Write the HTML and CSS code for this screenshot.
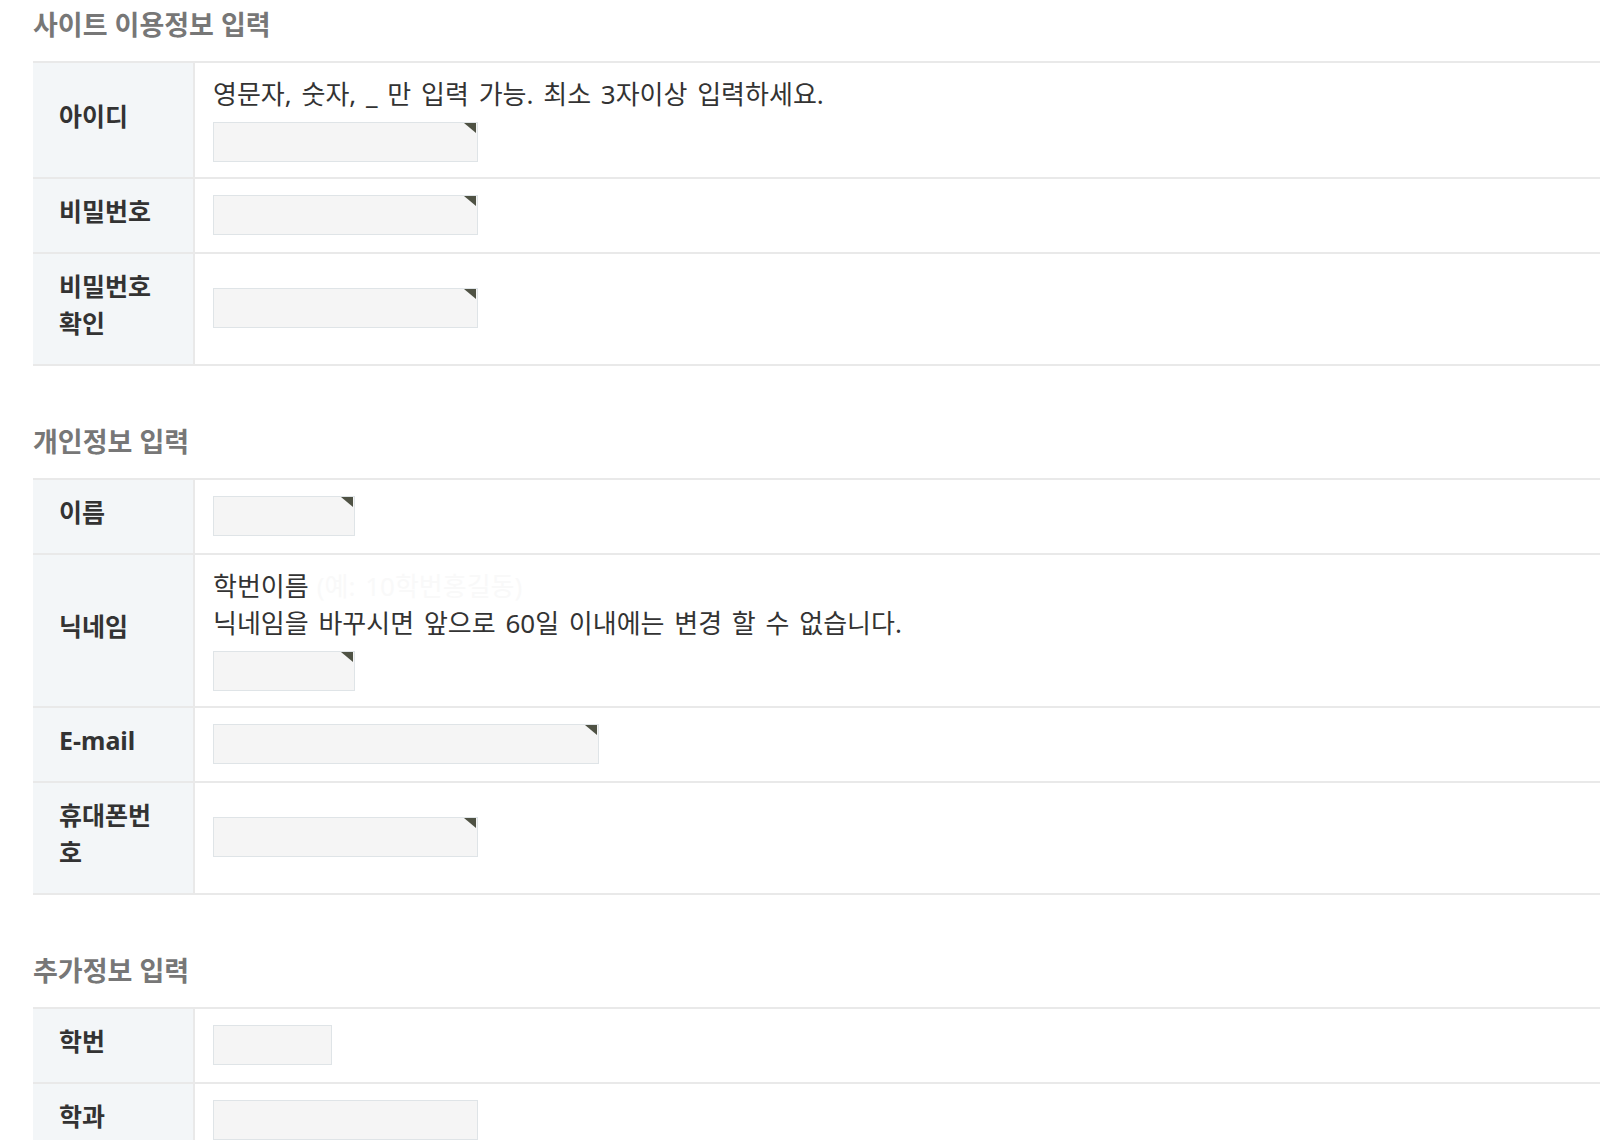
FILE: index.html
```html
<!DOCTYPE html>
<html lang="ko">

<head>
    <meta charset="utf-8">
    <meta name="viewport" content="width=device-width, initial-scale=1.0">
    <title>회원가입</title>
    <link rel="stylesheet" href="styles.css">
</head>

<body>
    <div class="wrap">
        <section class="form-section">
            <h2 class="section-title">사이트 이용정보 입력</h2>
            <table class="form-table">
                <tr>
                    <th>아이디</th>
                    <td>
                        <p class="help">영문자, 숫자, _ 만 입력 가능. 최소 3자이상 입력하세요.</p>
                        <span class="field req field-md"><input type="text" name="mb_id"></span>
                    </td>
                </tr>
                <tr>
                    <th>비밀번호</th>
                    <td><span class="field req field-md"><input type="password" name="mb_password"></span></td>
                </tr>
                <tr>
                    <th>비밀번호 확인</th>
                    <td><span class="field req field-md"><input type="password" name="mb_password_re"></span></td>
                </tr>
            </table>
        </section>

        <section class="form-section">
            <h2 class="section-title">개인정보 입력</h2>
            <table class="form-table">
                <tr>
                    <th>이름</th>
                    <td><span class="field req field-sm"><input type="text" name="mb_name"></span></td>
                </tr>
                <tr>
                    <th>닉네임</th>
                    <td>
                        <p class="help">학번이름<span class="ghost">(예: 10학번홍길동)</span></p>
                        <p class="help">닉네임을 바꾸시면 앞으로 60일 이내에는 변경 할 수 없습니다.</p>
                        <span class="field req field-sm"><input type="text" name="mb_nick"></span>
                    </td>
                </tr>
                <tr>
                    <th>E-mail</th>
                    <td><span class="field req field-lg"><input type="text" name="mb_email"></span></td>
                </tr>
                <tr>
                    <th>휴대폰번호</th>
                    <td><span class="field req field-md"><input type="text" name="mb_hp"></span></td>
                </tr>
            </table>
        </section>

        <section class="form-section">
            <h2 class="section-title">추가정보 입력</h2>
            <table class="form-table">
                <tr>
                    <th>학번</th>
                    <td><span class="field field-xs"><input type="text" name="mb_1"></span></td>
                </tr>
                <tr>
                    <th>학과</th>
                    <td><span class="field field-md"><input type="text" name="mb_2"></span></td>
                </tr>
            </table>
        </section>
    </div>
</body>

</html>
```

FILE: styles.css
```css
:root {
    --line: #e9e9e9;
    --label-bg: #f3f6f8;
    --input-bg: #f5f5f5;
    --input-border: #dfe4e7;
    --req: #4f5244;
    --text: #333333;
    --title: #777777;
}

*,
::before,
::after {
    box-sizing: border-box;
    padding: 0;
    margin: 0;
}

body {
    font-family: "Noto Sans", "Noto Sans CJK KR", sans-serif;
    font-size: 26px;
    color: var(--text);
    background: #ffffff;
    overflow: hidden;
}

.wrap {
    padding: 6px 0 0 33px;
}

.form-section + .form-section {
    margin-top: 57px;
}

.section-title {
    font-size: 27px;
    font-weight: bold;
    line-height: 37px;
    color: var(--title);
    margin-bottom: 18px;
}

.form-table {
    width: 100%;
    border-collapse: collapse;
    border-top: 2px solid var(--line);
}

.form-table tr {
    border-bottom: 2px solid var(--line);
}

.form-table th {
    width: 161px;
    padding: 14px 26px 22px;
    font-size: 25px;
    font-weight: bold;
    line-height: 37px;
    text-align: left;
    vertical-align: middle;
    background: var(--label-bg);
    border-right: 2px solid var(--line);
    word-break: break-all;
}

.form-table td {
    padding: 13px 18px 15px;
    vertical-align: middle;
}

.help {
    line-height: 37px;
    word-spacing: 3px;
}

.ghost {
    color: #f9f9f9;
    padding-left: 8px;
}

.field {
    position: relative;
    display: block;
    height: 40px;
}

.help + .field {
    margin-top: 9px;
}

.field input {
    display: block;
    width: 100%;
    height: 100%;
    border: 1px solid var(--input-border);
    background: var(--input-bg);
    font: inherit;
    padding: 0 8px;
}

/* required mark in the corner */
.req::after {
    content: "";
    position: absolute;
    top: 1px;
    right: 2px;
    width: 0;
    height: 0;
    border-top: 10px solid var(--req);
    border-left: 12px solid transparent;
}

.field-xs {
    width: 119px;
}

.field-sm {
    width: 142px;
}

.field-md {
    width: 265px;
}

.field-lg {
    width: 386px;
}
```
